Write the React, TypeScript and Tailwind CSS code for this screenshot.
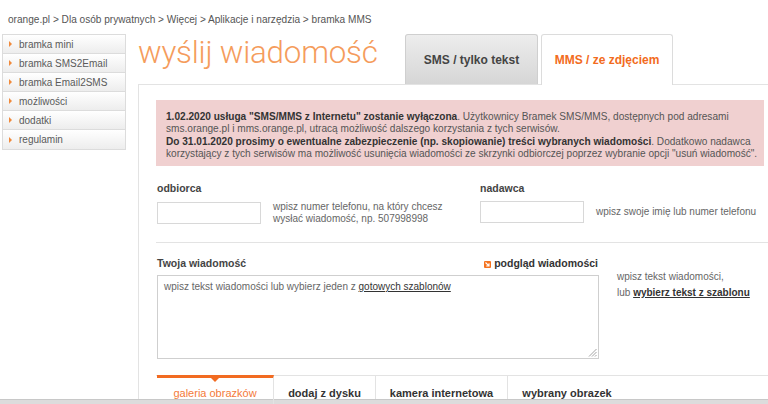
import React from "react";

const sideItems = ["bramka mini", "bramka SMS2Email", "bramka Email2SMS", "możliwości", "dodatki", "regulamin"];

function Bullet() {
  return <span className="inline-block w-0 h-0 border-y-[3px] border-y-transparent border-l-[3px] border-l-[#f08a3c] mr-[7px] ml-[6px]" />;
}

export default function App() {
  return (
    <div className="w-[768px] h-[404px] overflow-hidden bg-white flex flex-col font-['Liberation_Sans',Arial,sans-serif] text-[#666]">
      <div className="h-[34px] shrink-0 pl-[8px] pt-[13px] text-[10.1px] leading-[13px] text-[#555]">
        orange.pl &gt; Dla osób prywatnych &gt; Więcej &gt; Aplikacje i narzędzia &gt; bramka MMS
      </div>
      <div className="flex flex-1 min-h-0">
        <aside className="ml-[2px] w-[124px] self-start border border-[#dcdcdc]">
          {sideItems.map((s, i) => (
            <div
              key={s}
              className={`h-[19px] flex items-center text-[10px] text-[#5a5a5a] bg-gradient-to-b from-white to-[#ededed] ${i < sideItems.length - 1 ? "border-b border-[#dcdcdc]" : ""}`}
            >
              <Bullet />
              {s}
            </div>
          ))}
        </aside>
        <main className="ml-[12px] flex-1 flex flex-col min-w-0">
          <div className="h-[50px] shrink-0 flex items-end">
            <div className="w-[267px] self-start pt-[1px] font-['Roboto',Arial,sans-serif] font-light text-[31.3px] leading-[36px] text-[#f59c5c] tracking-[-0.2px]">
              wyślij wiadomość
            </div>
            <div className="h-[50px] w-[133px] border border-b-0 border-[#cfcfcf] rounded-t-[3px] bg-gradient-to-b from-[#ededed] to-[#d6d6d6] flex items-center justify-center text-[12px] font-bold text-[#444]">
              SMS / tylko tekst
            </div>
            <div className="h-[51px] w-[132px] ml-[3px] mb-[-1px] border border-b-0 border-[#dcdcdc] rounded-t-[3px] bg-white flex items-center justify-center text-[12px] font-bold text-[#f26b21] relative z-10">
              MMS / ze zdjęciem
            </div>
          </div>
          <div className="flex-1 border-l border-t border-[#e3e3e3] pl-[17px] pt-[15px] flex flex-col">
            <div className="h-[66px] mr-[4px] bg-[#f0d0d0] pl-[10px] pr-[4px] pt-[11px] text-[10.1px] leading-[12.4px] text-[#555] whitespace-nowrap overflow-hidden">
              <div>
                <b className="text-[#333]">1.02.2020 usługa "SMS/MMS z Internetu" zostanie wyłączona</b>. Użytkownicy Bramek SMS/MMS, dostępnych pod adresami
              </div>
              <div>sms.orange.pl i mms.orange.pl, utracą możliwość dalszego korzystania z tych serwisów.</div>
              <div>
                <b className="text-[#333]">Do 31.01.2020 prosimy o ewentualne zabezpieczenie (np. skopiowanie) treści wybranych wiadomości</b>. Dodatkowo nadawca
              </div>
              <div>korzystający z tych serwisów ma możliwość usunięcia wiadomości ze skrzynki odbiorczej poprzez wybranie opcji "usuń wiadomość".</div>
            </div>

            <div className="flex pl-[1px] pt-[16px]">
              <div className="w-[323px]">
                <div className="text-[10.5px] leading-[13px] font-bold text-[#444]">odbiorca</div>
                <div className="flex items-center mt-[6px]">
                  <div className="w-[104px] h-[22px] border border-[#d8d8d8] bg-white" />
                  <div className="ml-[12px] text-[10px] leading-[12px] text-[#666]">
                    wpisz numer telefonu, na który chcesz
                    <br />
                    wysłać wiadomość, np. 507998998
                  </div>
                </div>
              </div>
              <div>
                <div className="text-[10.5px] leading-[13px] font-bold text-[#444]">nadawca</div>
                <div className="flex items-center mt-[6px]">
                  <div className="w-[104px] h-[22px] border border-[#d8d8d8] bg-white" />
                  <div className="ml-[12px] text-[10px] leading-[12px] text-[#666] whitespace-nowrap">wpisz swoje imię lub numer telefonu</div>
                </div>
              </div>
            </div>

            <div className="h-px bg-[#e3e3e3] mt-[17px]" />

            <div className="flex pl-[1px] pt-[14px]">
              <div className="w-[442px]">
                <div className="flex justify-between items-center h-[13px]">
                  <div className="text-[10.5px] font-bold text-[#444]">Twoja wiadomość</div>
                  <div className="flex items-center text-[10.5px] font-bold text-[#333] mr-[1px]">
                    <svg width="7" height="7" viewBox="0 0 7 7" className="mr-[3px] mt-[2px]">
                      <rect width="7" height="7" fill="#f47320" rx="1" />
                      <path d="M1.5 1.5 L5 5 M5 2.2 V5 H2.2" stroke="white" strokeWidth="1.1" fill="none" />
                    </svg>
                    podgląd wiadomości
                  </div>
                </div>
                <div className="relative mt-[5px] h-[84px] border border-[#cfcfcf] bg-white px-[6px] pt-[5px] text-[10px] leading-[12px] text-[#666]">
                  wpisz tekst wiadomości lub wybierz jeden z <span className="underline text-[#333]">gotowych szablonów</span>
                  <svg width="9" height="9" viewBox="0 0 9 9" className="absolute right-[1px] bottom-[1px]">
                    <path d="M8.5 1 L1 8.5 M8.5 4 L4 8.5 M8.5 7 L7 8.5" stroke="#999" strokeWidth="0.9" />
                  </svg>
                </div>
              </div>
              <div className="ml-[18px] pt-[12px] text-[10px] leading-[16px] text-[#666]">
                wpisz tekst wiadomości,
                <br />
                lub <span className="underline font-bold text-[#333]">wybierz tekst z szablonu</span>
              </div>
            </div>

            <div className="mt-[16px] border-t border-[#e3e3e3] flex h-[30px] text-[11px] font-bold text-[#333]">
              <div className="relative w-[117px] ml-[1px] flex items-start justify-center pt-[7px] font-normal text-[#f47a3a] border-t-[3px] border-[#f26b21] mt-[-1px] border-r border-r-[#e3e3e3]">
                <span className="absolute top-0 left-1/2 -translate-x-1/2 w-0 h-0 border-x-[4px] border-x-transparent border-t-[4px] border-t-[#f26b21]" />
                galeria obrazków
              </div>
              <div className="w-[102px] flex items-start justify-center pt-[9px] border-r border-[#e3e3e3]">dodaj z dysku</div>
              <div className="w-[132px] flex items-start justify-center pt-[9px] border-r border-[#e3e3e3]">kamera internetowa</div>
              <div className="w-[118px] flex items-start justify-center pt-[9px]">wybrany obrazek</div>
            </div>
          </div>
        </main>
      </div>
      <div className="h-[5px] shrink-0 bg-[#dcdcdc] border-t border-[#c8c8c8]" />
    </div>
  );
}
